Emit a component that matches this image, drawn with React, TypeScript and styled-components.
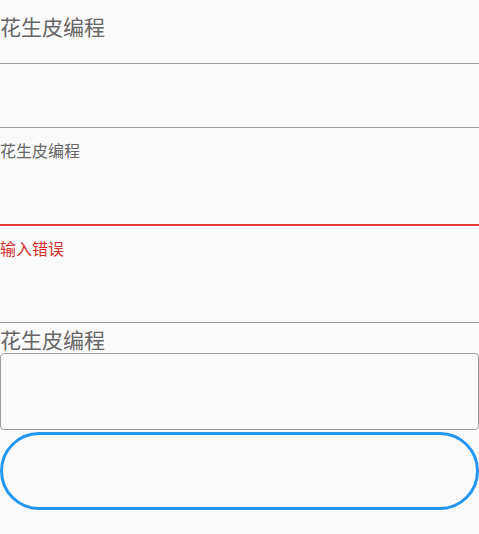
import React from 'react';
import styled, { createGlobalStyle } from 'styled-components';

const GlobalStyle = createGlobalStyle`
  html, body {
    margin: 0;
    padding: 0;
    background: #fafafa;
  }
  body {
    font-family: 'Noto Sans CJK SC', 'Noto Sans', sans-serif;
    color: #666;
  }
`;

const Page = styled.div`
  width: 479px;
  display: flex;
  flex-direction: column;
`;

const UnderlineField = styled.div<{ $height: number; $error?: boolean }>`
  height: ${(p) => p.$height}px;
  box-sizing: border-box;
  border-bottom: ${(p) => (p.$error ? '2px solid #e53935' : '1px solid #9e9e9e')};
  display: flex;
  flex-direction: column;
`;

const BigLabel = styled.span`
  font-size: 21px;
  line-height: 25px;
  color: #666;
`;

const OuterLabel = styled(BigLabel)`
  padding-top: 3px;
  line-height: 27px;
`;

const SmallLabel = styled.span`
  font-size: 16px;
  line-height: 20px;
  color: #666;
`;

const ErrorText = styled.span`
  font-size: 16px;
  line-height: 20px;
  color: #d32f2f;
  padding-top: 12px;
  height: 72px;
`;

const OutlinedBox = styled.div`
  height: 77px;
  box-sizing: border-box;
  border: 1px solid #9e9e9e;
  border-radius: 4px;
`;

const PillBox = styled.div`
  height: 78px;
  box-sizing: border-box;
  border: 3px solid #2196f3;
  border-radius: 39px;
  margin-top: 2px;
`;

const TopPad = styled.div<{ $h: number }>`
  height: ${(p) => p.$h}px;
  flex-shrink: 0;
`;

export default function App() {
  return (
    <Page>
      <GlobalStyle />
      <UnderlineField $height={64}>
        <TopPad $h={14} />
        <BigLabel>花生皮编程</BigLabel>
      </UnderlineField>
      <UnderlineField $height={64} />
      <UnderlineField $height={98} $error>
        <TopPad $h={12} />
        <SmallLabel>花生皮编程</SmallLabel>
      </UnderlineField>
      <UnderlineField $height={97}>
        <ErrorText>输入错误</ErrorText>
      </UnderlineField>
      <OuterLabel>花生皮编程</OuterLabel>
      <OutlinedBox />
      <PillBox />
    </Page>
  );
}
